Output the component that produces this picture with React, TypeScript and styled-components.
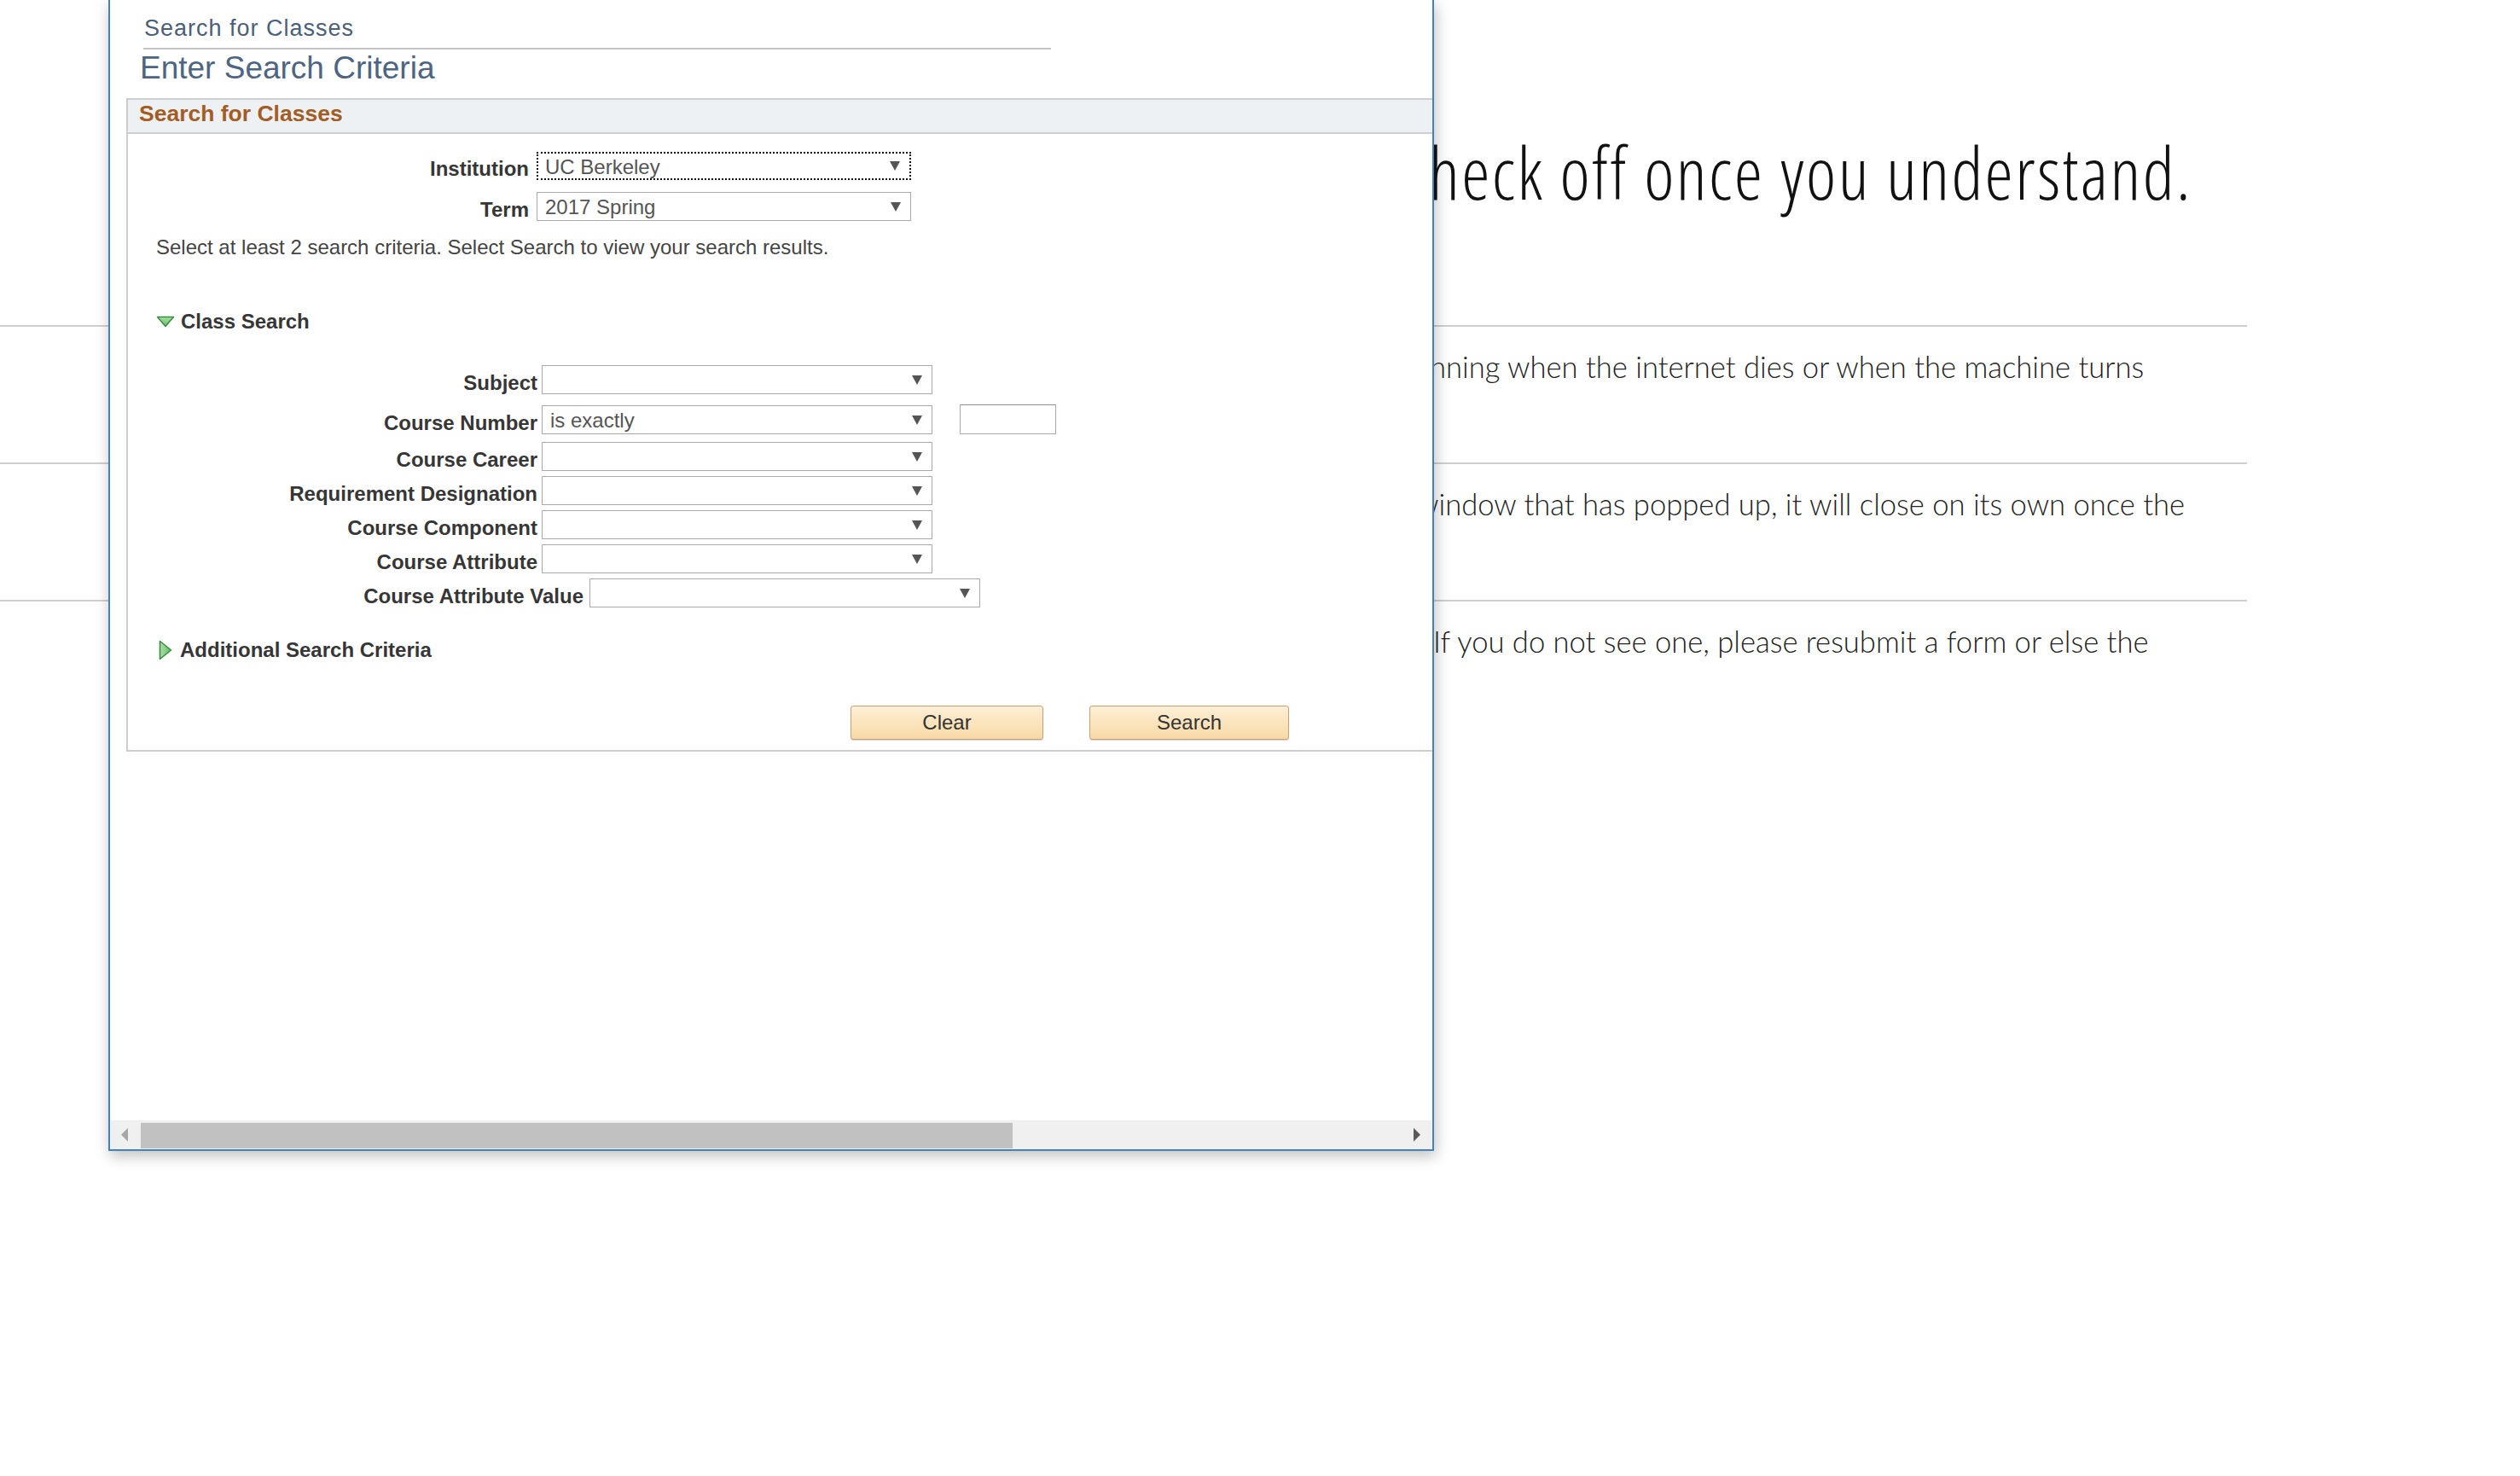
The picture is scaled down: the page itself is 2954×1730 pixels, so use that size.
import React from "react";
import styled, { createGlobalStyle } from "styled-components";

const GlobalStyle = createGlobalStyle`
  html, body { margin: 0; padding: 0; background: #ffffff; }
  body {
    width: 2954px;
    height: 1730px;
    overflow: hidden;
    font-family: "Liberation Sans", Arial, sans-serif;
  }
  * { box-sizing: border-box; }
`;

const Desktop = styled.div`
  position: relative;
  width: 2954px;
  height: 1730px;
  overflow: hidden;
  background: #ffffff;
`;

/* ---------- background web page ---------- */
const Page = styled.main`
  display: flex;
  flex-direction: column;
  width: 2634px;
  padding-top: 149px;
  color: #1c1c1c;
`;

const Heading = styled.h1`
  margin: 0 0 126px;
  font-family: "Open Sans", sans-serif;
  font-weight: 300;
  font-stretch: 75%;
  font-size: 84px;
  line-height: 106px;
  letter-spacing: 2.4px;
  color: #111111;
`;

const Note = styled.section`
  border-top: 2px solid #cfcfcf;
  height: 161px;
  padding-top: 25px;
  font: 300 34.6px/44px "Lato", sans-serif;
  color: #222222;
`;

const Line = styled.div`
  display: flex;
  white-space: nowrap;
`;

const Covered = styled.span`
  flex: 0 0 1680px;
  overflow: hidden;
  text-align: right;
`;

const Shown = styled.span<{ $shift: number }>`
  margin-left: ${(p) => p.$shift}px;
`;

/* ---------- popup window ---------- */
const Window = styled.section`
  position: absolute;
  left: 127px;
  top: 0;
  z-index: 2;
  width: 1554px;
  height: 1349px;
  display: flex;
  flex-direction: column;
  background: #ffffff;
  border: 2px solid #4582bb;
  border-top: none;
  box-shadow: 2px 6px 16px rgba(0, 0, 0, 0.25);
`;

const WindowBody = styled.div`
  flex: 1;
  display: flex;
  flex-direction: column;
  padding-top: 19px;
`;

const PageTitle = styled.div`
  margin-left: 40px;
  font-size: 27px;
  line-height: 29px;
  letter-spacing: 1px;
  color: #4b5f78;
`;

const TitleRule = styled.div`
  margin: 8px 0 0 39px;
  width: 1064px;
  height: 2px;
  background: #c4c4c4;
`;

const PageHeading = styled.h2`
  margin: 1px 0 0 35px;
  font-size: 37px;
  line-height: 41px;
  font-weight: 400;
  color: #4d6583;
`;

const GroupBox = styled.div`
  margin: 15px 0 0 19px;
  display: flex;
  flex-direction: column;
`;

const GroupHeader = styled.div`
  height: 42px;
  padding-left: 13px;
  background: #eef1f3;
  border: 2px solid #cdcdcd;
  border-right: none;
  font-size: 26.5px;
  line-height: 32px;
  font-weight: 700;
  color: #a35c24;
`;

const GroupBody = styled.div`
  height: 724px;
  display: flex;
  flex-direction: column;
  border-left: 2px solid #cdcdcd;
  border-bottom: 2px solid #cdcdcd;
`;

const FieldRow = styled.div<{ $top: number }>`
  display: flex;
  align-items: flex-end;
  margin-top: ${(p) => p.$top}px;
`;

const FieldLabel = styled.label<{ $width: number; $gap: number }>`
  flex: 0 0 ${(p) => p.$width}px;
  margin-right: ${(p) => p.$gap}px;
  text-align: right;
  font-size: 24px;
  line-height: 26px;
  font-weight: 700;
  color: #363636;
  white-space: nowrap;
`;

const SelectBox = styled.div<{ $width: number; $height: number; $focused?: boolean }>`
  width: ${(p) => p.$width}px;
  height: ${(p) => p.$height}px;
  display: flex;
  align-items: center;
  padding: 2px 0 0 ${(p) => (p.$focused ? 8 : 9)}px;
  border: ${(p) => (p.$focused ? "2px dotted #111111" : "1px solid #a9a9a9")};
  background: #ffffff;
  font-size: 24px;
  color: #555555;
  white-space: nowrap;
`;

const DropArrow = styled.span`
  margin-left: auto;
  margin-right: 11px;
  margin-top: -2px;
  width: 0;
  height: 0;
  border-left: 6px solid transparent;
  border-right: 6px solid transparent;
  border-top: 11px solid #555555;
`;

const TextInput = styled.div`
  margin-left: 32px;
  width: 113px;
  height: 35px;
  border: 1px solid #a9a9a9;
  border-top-color: #8f8f8f;
  background: #ffffff;
`;

const Instruction = styled.p`
  margin: 18px 0 0 33px;
  font-size: 24px;
  line-height: 26px;
  color: #444444;
`;

const Disclosure = styled.div<{ $top: number; $left: number; $indent: number }>`
  display: flex;
  align-items: center;
  gap: ${(p) => p.$indent}px;
  margin: ${(p) => p.$top}px 0 0 ${(p) => p.$left}px;
  font-size: 24px;
  line-height: 28px;
  font-weight: 700;
  color: #363636;
`;

const ButtonBar = styled.div`
  display: flex;
  gap: 54px;
  margin: 51px 0 0 847px;
`;

const PsButton = styled.button<{ $width: number }>`
  width: ${(p) => p.$width}px;
  height: 40px;
  padding: 0;
  border: 1px solid #c4a36e;
  border-radius: 3px;
  background: linear-gradient(to bottom, #fdefd6 0%, #fbe3bb 55%, #f7d9a6 100%);
  box-shadow: 0 1px 1px rgba(0, 0, 0, 0.18);
  font-family: "Liberation Sans", Arial, sans-serif;
  font-size: 24px;
  color: #333333;
`;

const HScroll = styled.div`
  flex: 0 0 34px;
  display: flex;
  align-items: center;
  padding-left: 13px;
  background: #f0f0f0;
`;

const ScrollArrow = styled.span<{ $dir: "left" | "right"; $color: string }>`
  width: 0;
  height: 0;
  border-top: 8px solid transparent;
  border-bottom: 8px solid transparent;
  ${(p) =>
    p.$dir === "left"
      ? `border-right: 8px solid ${p.$color};`
      : `border-left: 8px solid ${p.$color}; margin-left: auto; margin-right: 14px;`}
`;

const Thumb = styled.div`
  align-self: flex-end;
  margin: 0 0 1px 15px;
  width: 1022px;
  height: 30px;
  background: #c1c1c1;
`;

const DownTriangle = () => (
  <svg width="22" height="14" viewBox="0 0 22 14">
    <defs>
      <linearGradient id="gd" x1="0" y1="0" x2="0" y2="1">
        <stop offset="0" stopColor="#a8e2a8" />
        <stop offset="1" stopColor="#5fbf63" />
      </linearGradient>
    </defs>
    <polygon points="1.5,1.5 20.5,1.5 11,12.5" fill="url(#gd)" stroke="#3e8e41" strokeWidth="1.6" strokeLinejoin="round" />
  </svg>
);

const RightTriangle = () => (
  <svg width="16" height="24" viewBox="0 0 16 24">
    <defs>
      <linearGradient id="gr" x1="0" y1="0" x2="1" y2="0">
        <stop offset="0" stopColor="#a8e2a8" />
        <stop offset="1" stopColor="#5fbf63" />
      </linearGradient>
    </defs>
    <polygon points="1.5,1.5 14.5,12 1.5,22.5" fill="url(#gr)" stroke="#3e8e41" strokeWidth="1.6" strokeLinejoin="round" />
  </svg>
);

type Field = { label: string; top: number; width: number; gap: number; selWidth: number; value?: string; input?: boolean };

const fields: Field[] = [
  { label: "Subject", top: 37, width: 480, gap: 5, selWidth: 458 },
  { label: "Course Number", top: 12, width: 480, gap: 5, selWidth: 458, value: "is exactly", input: true },
  { label: "Course Career", top: 9, width: 480, gap: 5, selWidth: 458 },
  { label: "Requirement Designation", top: 6, width: 480, gap: 5, selWidth: 458 },
  { label: "Course Component", top: 6, width: 480, gap: 5, selWidth: 458 },
  { label: "Course Attribute", top: 6, width: 480, gap: 5, selWidth: 458 },
  { label: "Course Attribute Value", top: 6, width: 534, gap: 7, selWidth: 458 },
];

export default function App() {
  return (
    <>
      <GlobalStyle />
      <Desktop>
        <Page>
          <Heading>
            <Line>
              <Covered>Please c</Covered>
              <Shown $shift={-5}>heck off once you understand.</Shown>
            </Line>
          </Heading>
          <Note>
            <Line>
              <Covered>The enrollment script will stop ru</Covered>
              <Shown $shift={-4}>nning when the internet dies or when the machine turns</Shown>
            </Line>
            <Line>
              <Covered>off.</Covered>
            </Line>
          </Note>
          <Note>
            <Line>
              <Covered>Do not close the </Covered>
              <Shown $shift={-20}>window that has popped up, it will close on its own once the</Shown>
            </Line>
            <Line>
              <Covered>script is done.</Covered>
            </Line>
          </Note>
          <Note>
            <Line>
              <Covered>You should receive a confirmation email.</Covered>
              <Shown $shift={0}>If you do not see one, please resubmit a form or else the</Shown>
            </Line>
            <Line>
              <Covered>enrollment may not have gone through.</Covered>
            </Line>
          </Note>
        </Page>

        <Window>
          <WindowBody>
            <PageTitle>Search for Classes</PageTitle>
            <TitleRule />
            <PageHeading>Enter Search Criteria</PageHeading>
            <GroupBox>
              <GroupHeader>Search for Classes</GroupHeader>
              <GroupBody>
                <FieldRow $top={21}>
                  <FieldLabel $width={470} $gap={9}>Institution</FieldLabel>
                  <SelectBox $width={439} $height={33} $focused>
                    UC Berkeley
                    <DropArrow />
                  </SelectBox>
                </FieldRow>
                <FieldRow $top={14}>
                  <FieldLabel $width={470} $gap={9}>Term</FieldLabel>
                  <SelectBox $width={439} $height={34}>
                    2017 Spring
                    <DropArrow />
                  </SelectBox>
                </FieldRow>
                <Instruction>Select at least 2 search criteria. Select Search to view your search results.</Instruction>
                <Disclosure $top={60} $left={33} $indent={7}>
                  <DownTriangle />
                  Class Search
                </Disclosure>
                {fields.map((f) => (
                  <FieldRow key={f.label} $top={f.top}>
                    <FieldLabel $width={f.width} $gap={f.gap}>{f.label}</FieldLabel>
                    <SelectBox $width={f.selWidth} $height={34}>
                      {f.value ?? ""}
                      <DropArrow />
                    </SelectBox>
                    {f.input && <TextInput />}
                  </FieldRow>
                ))}
                <Disclosure $top={36} $left={36} $indent={9}>
                  <RightTriangle />
                  Additional Search Criteria
                </Disclosure>
                <ButtonBar>
                  <PsButton $width={226}>Clear</PsButton>
                  <PsButton $width={234}>Search</PsButton>
                </ButtonBar>
              </GroupBody>
            </GroupBox>
          </WindowBody>
          <HScroll>
            <ScrollArrow $dir="left" $color="#a6a6a6" />
            <Thumb />
            <ScrollArrow $dir="right" $color="#5a5a5a" />
          </HScroll>
        </Window>
      </Desktop>
    </>
  );
}
